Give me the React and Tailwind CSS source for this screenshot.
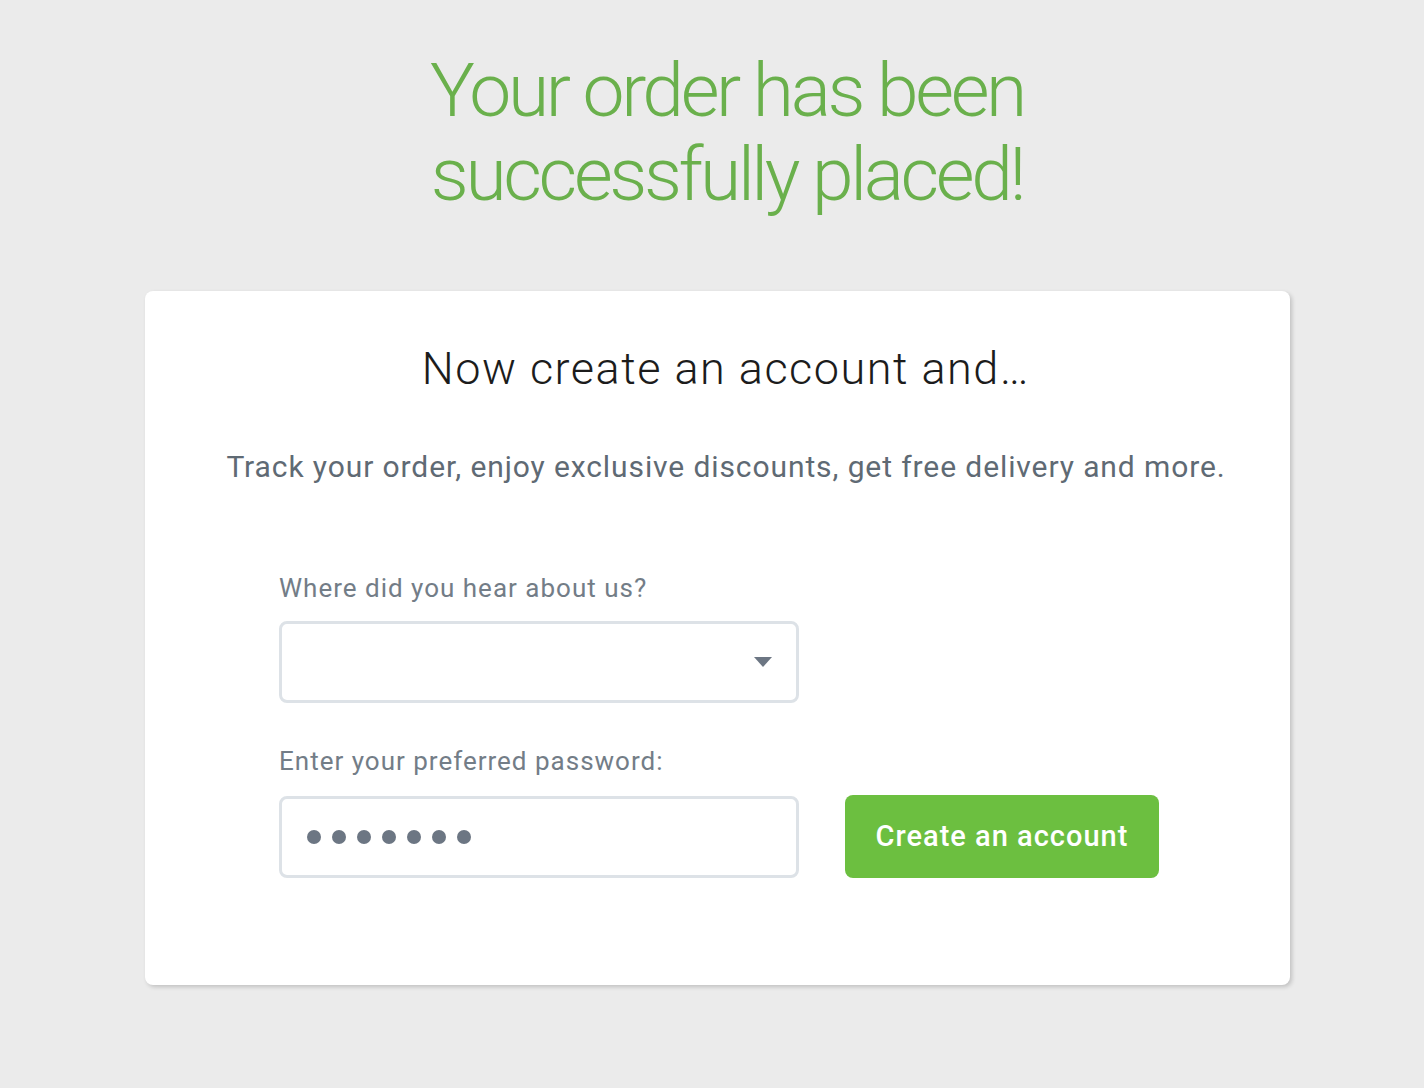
export default function App() {
  return (
    <div
      className="min-h-screen bg-[#ebebeb] pt-[48px] pb-[100px]"
      style={{ fontFamily: 'Roboto, "Liberation Sans", sans-serif' }}
    >
      {/* Headline */}
      <h1 className="pl-[30px] text-center text-[75px] font-light leading-[84px] tracking-[-0.045em] text-[#6ab04c]">
        Your order has been
        <br />
        successfully placed!
      </h1>

      {/* Card */}
      <div className="ml-[145px] mt-[75px] h-[694px] w-[1145px] rounded-lg bg-white shadow-[2px_2px_4px_rgba(0,0,0,0.18)]">
        <div className="pl-[17px] pt-[50px] text-center">
          <h2 className="text-[45px] font-light leading-[56px] tracking-[1.5px] text-[#1c1c1c]">Now create an account and…</h2>
          <p className="mt-[52px] text-[30px] leading-[36px] tracking-[0.9px] text-[#5f6a74]">
            Track your order, enjoy exclusive discounts, get free delivery and more.
          </p>
        </div>

        {/* Form */}
        <div className="ml-[134px] mt-[87px] flex flex-col">
          <label className="text-[26px] leading-[32px] tracking-[1px] text-[#737d87]">Where did you hear about us?</label>
          <div className="mt-[17px] flex h-[82px] w-[520px] items-center justify-end rounded-lg border-[3px] border-[#dde2e7] pr-[24px]">
            <svg width="18" height="10" viewBox="0 0 18 10">
              <path d="M0 0 L18 0 L9 10 Z" fill="#6c7683" />
            </svg>
          </div>

          <label className="mt-[42px] text-[26px] leading-[32px] tracking-[1px] text-[#737d87]">Enter your preferred password:</label>
          <div className="mt-[18px] flex items-center gap-[46px]">
            <div className="flex h-[82px] w-[520px] items-center gap-[11px] rounded-lg border-[3px] border-[#dde2e7] pl-[25px]">
              {[0, 1, 2, 3, 4, 5, 6].map((i) => (
                <span key={i} className="h-[14px] w-[14px] rounded-full bg-[#6c7683]" />
              ))}
            </div>
            <button className="h-[83px] w-[314px] rounded-lg bg-[#6cbf40] text-[29px] font-medium tracking-[1px] text-white">
              Create an account
            </button>
          </div>
        </div>
      </div>
    </div>
  );
}
